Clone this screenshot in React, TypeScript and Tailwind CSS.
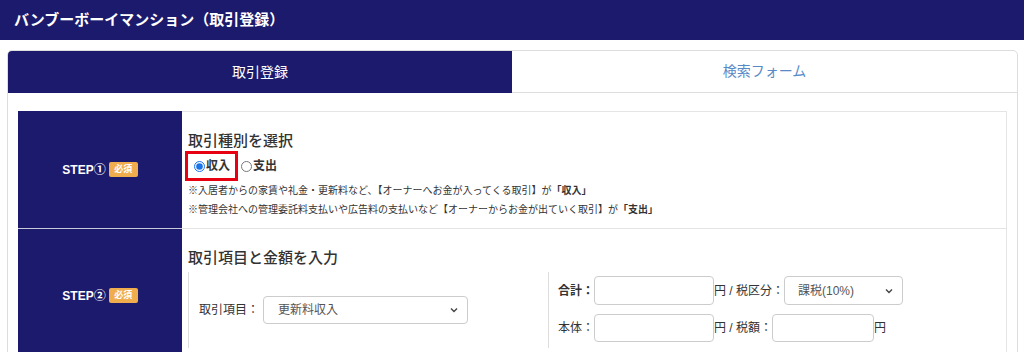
import { ReactNode } from "react";

function StepCell(props: { label: string; last?: boolean }) {
  return (
    <div
      className={
        "w-[164px] shrink-0 bg-[#1c1a6c] flex items-center justify-center gap-[3px] " +
        (props.last ? "" : "border-b border-[#c9c9d9]")
      }
    >
      <span className="text-white text-[12px] font-bold">{props.label}</span>
      <span className="bg-[#f0ad4e] text-white text-[9px] font-bold rounded-[2px] w-[29px] h-[15px] flex items-center justify-center">
        必須
      </span>
    </div>
  );
}

function Chevron() {
  return (
    <svg width="10" height="10" viewBox="0 0 10 10" className="absolute right-[8px] top-1/2 -translate-y-1/2">
      <path d="M2 3.5 L5 6.5 L8 3.5" fill="none" stroke="#444" strokeWidth="1.4" />
    </svg>
  );
}

function FakeSelect(props: { value: string; className: string; children?: ReactNode }) {
  return (
    <div
      className={clsxLike(
        "relative border border-[#ccc] rounded-[4px] bg-white flex items-center text-[12px] text-[#555]",
        props.className
      )}
    >
      {props.value}
      <Chevron />
    </div>
  );
}

function clsxLike(...parts: string[]) {
  return parts.filter(Boolean).join(" ");
}

export default function App() {
  return (
    <div className="w-[1024px] h-[352px] overflow-hidden bg-white font-['Liberation_Sans','Noto_Sans_CJK_JP',sans-serif] text-[#333]">
      <header className="h-10 bg-[#1c1a6c] flex items-center px-[14px] text-white text-[15px] font-bold">
        バンブーボーイマンション（取引登録）
      </header>

      <div className="pl-[7px] pr-[6px] pt-[10px]">
        <div className="border border-[#ddd] rounded-t-[5px] overflow-hidden">
          <div className="flex h-[42px]">
            <div className="w-[504px] bg-[#1c1a6c] text-white text-[14px] flex items-center justify-center">
              取引登録
            </div>
            <div className="flex-1 border-b border-[#ddd] text-[#5a8ac6] text-[14px] flex items-center justify-center">
              検索フォーム
            </div>
          </div>

          <div className="px-[10px] pt-[18px]">
            {/* STEP 1 */}
            <div className="flex">
              <StepCell label="STEP①" />
              <div className="flex-1 border-t border-r border-b border-[#e5e5e5] pl-[6px] pt-[19px] pb-[9px]">
                <h2 className="text-[15px] leading-[20px] font-medium">取引種別を選択</h2>
                <div className="flex items-center ml-[-3px] h-[30px]">
                  <label className="h-[30px] border-[3px] border-[#e60012] flex items-center pl-[6px] pr-[5px] text-[12px] font-bold">
                    <input type="radio" name="kind" defaultChecked className="m-0 w-[11px] h-[11px] accent-[#1a73e8]" />
                    <span className="ml-[1px]">収入</span>
                  </label>
                  <label className="flex items-center ml-[3px] text-[12px] font-bold">
                    <input type="radio" name="kind" className="m-0 w-[11px] h-[11px]" />
                    <span className="ml-[1px]">支出</span>
                  </label>
                </div>
                <p className="text-[10px] leading-[19px]">
                  ※入居者からの家賃や礼金・更新料など、【オーナーへお金が入ってくる取引】が<b>「収入」</b>
                </p>
                <p className="text-[10px] leading-[19px]">
                  ※管理会社への管理委託料支払いや広告料の支払いなど【オーナーからお金が出ていく取引】が<b>「支出」</b>
                </p>
              </div>
            </div>

            {/* STEP 2 */}
            <div className="flex">
              <StepCell label="STEP②" last />
              <div className="flex-1 border-r border-[#e5e5e5] pl-[6px] pt-[19px] pb-[14px]">
                <h2 className="text-[15px] leading-[20px] font-medium">取引項目と金額を入力</h2>
                <div className="flex h-[76px] mt-[4px]">
                  <div className="w-[360px] border-l border-[#ddd] pl-[10px] flex items-center gap-[4px] text-[12px]">
                    <span>取引項目：</span>
                    <FakeSelect value="更新料収入" className="w-[205px] h-[28px] pl-[14px]" />
                  </div>
                  <div className="flex-1 border-l border-[#ddd] pl-[9px] pt-[4px] flex flex-col gap-[9px] text-[12px]">
                    <div className="flex items-center h-[29px]">
                      <span className="w-[36px] font-bold">合計：</span>
                      <input className="w-[120px] h-[29px] border border-[#ccc] rounded-[4px]" />
                      <span>円 / 税区分：</span>
                      <FakeSelect value="課税(10%)" className="w-[119px] h-[29px] pl-[13px]" />
                    </div>
                    <div className="flex items-center h-[28px]">
                      <span className="w-[36px]">本体：</span>
                      <input className="w-[120px] h-[28px] border border-[#ccc] rounded-[4px]" />
                      <span>円 / 税額：</span>
                      <input className="w-[102px] h-[28px] border border-[#ccc] rounded-[4px]" />
                      <span>円</span>
                    </div>
                  </div>
                </div>
              </div>
            </div>
          </div>
        </div>
      </div>
    </div>
  );
}
